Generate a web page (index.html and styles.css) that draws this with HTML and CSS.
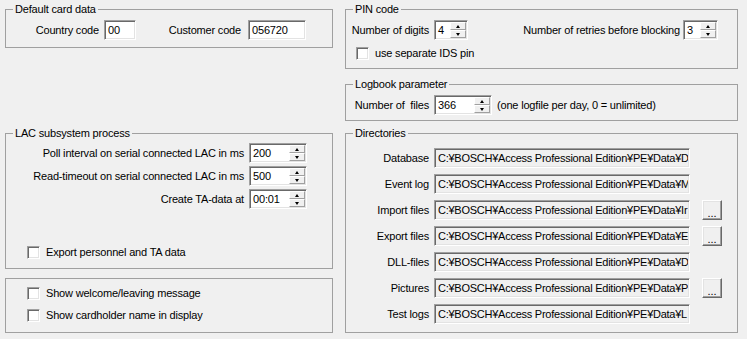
FILE: index.html
```html
<!DOCTYPE html>
<html>
<head>
<meta charset="utf-8">
<link rel="stylesheet" href="styles.css">
</head>
<body>
<div class="page">
  <div class="col col-left">
    <fieldset class="group g-card">
      <legend>Default card data</legend>
      <div class="row card-row">
        <span class="lbl lbl-country">Country code</span>
        <div class="edit w-country"><span class="val">00</span></div>
        <span class="lbl lbl-customer">Customer code</span>
        <div class="edit w-customer"><span class="val">056720</span></div>
      </div>
    </fieldset>

    <fieldset class="group g-lac">
      <legend>LAC subsystem process</legend>
      <div class="lac-rows">
        <div class="row">
          <span class="lbl lbl-lac">Poll interval on serial connected LAC in ms</span>
          <div class="edit w-lac"><span class="val">200</span><div class="spin"><div class="spin-btn"><i class="arr-up"></i></div><div class="spin-btn"><i class="arr-down"></i></div></div></div>
        </div>
        <div class="row">
          <span class="lbl lbl-lac">Read-timeout on serial connected LAC in ms</span>
          <div class="edit w-lac"><span class="val">500</span><div class="spin"><div class="spin-btn"><i class="arr-up"></i></div><div class="spin-btn"><i class="arr-down"></i></div></div></div>
        </div>
        <div class="row">
          <span class="lbl lbl-lac">Create TA-data at</span>
          <div class="edit w-lac"><span class="val">00:01</span><div class="spin"><div class="spin-btn"><i class="arr-up"></i></div><div class="spin-btn"><i class="arr-down"></i></div></div></div>
        </div>
      </div>
      <label class="check lac-check"><span class="box"></span><span>Export personnel and TA data</span></label>
    </fieldset>

    <fieldset class="group g-display">
      <label class="check"><span class="box"></span><span>Show welcome/leaving message</span></label>
      <label class="check"><span class="box"></span><span>Show cardholder name in display</span></label>
    </fieldset>
  </div>

  <div class="col col-right">
    <fieldset class="group g-pin">
      <legend>PIN code</legend>
      <div class="row">
        <span class="lbl lbl-dir">Number of digits</span>
        <div class="edit w-digits"><span class="val">4</span><div class="spin"><div class="spin-btn"><i class="arr-up"></i></div><div class="spin-btn"><i class="arr-down"></i></div></div></div>
        <span class="lbl lbl-retries">Number of retries before blocking</span>
        <div class="edit w-retries"><span class="val">3</span><div class="spin"><div class="spin-btn"><i class="arr-up"></i></div><div class="spin-btn"><i class="arr-down"></i></div></div></div>
      </div>
      <label class="check pin-check"><span class="box"></span><span>use separate IDS pin</span></label>
    </fieldset>

    <fieldset class="group g-log">
      <legend>Logbook parameter</legend>
      <div class="row">
        <span class="lbl lbl-dir">Number of&nbsp; files</span>
        <div class="edit w-files"><span class="val">366</span><div class="spin"><div class="spin-btn"><i class="arr-up"></i></div><div class="spin-btn"><i class="arr-down"></i></div></div></div>
        <span class="note">(one logfile per day, 0 = unlimited)</span>
      </div>
    </fieldset>

    <fieldset class="group g-dirs">
      <legend>Directories</legend>
      <div class="dir-rows">
        <div class="row"><span class="lbl lbl-dir">Database</span><div class="edit ro w-path"><span class="val path">C:¥BOSCH¥Access Professional Edition¥PE¥Data¥D</span></div></div>
        <div class="row"><span class="lbl lbl-dir">Event log</span><div class="edit ro w-path"><span class="val path">C:¥BOSCH¥Access Professional Edition¥PE¥Data¥M</span></div></div>
        <div class="row"><span class="lbl lbl-dir">Import files</span><div class="edit ro w-path"><span class="val path">C:¥BOSCH¥Access Professional Edition¥PE¥Data¥Ir</span></div><button class="btn">...</button></div>
        <div class="row"><span class="lbl lbl-dir">Export files</span><div class="edit ro w-path"><span class="val path">C:¥BOSCH¥Access Professional Edition¥PE¥Data¥E</span></div><button class="btn">...</button></div>
        <div class="row"><span class="lbl lbl-dir">DLL-files</span><div class="edit ro w-path"><span class="val path">C:¥BOSCH¥Access Professional Edition¥PE¥Data¥D</span></div></div>
        <div class="row"><span class="lbl lbl-dir">Pictures</span><div class="edit ro w-path"><span class="val path">C:¥BOSCH¥Access Professional Edition¥PE¥Data¥P</span></div><button class="btn">...</button></div>
        <div class="row"><span class="lbl lbl-dir">Test logs</span><div class="edit ro w-path"><span class="val path">C:¥BOSCH¥Access Professional Edition¥PE¥Data¥L</span></div></div>
      </div>
    </fieldset>
  </div>
</div>
</body>
</html>
```
FILE: styles.css
```css
* { box-sizing: border-box; }
html, body { margin: 0; padding: 0; }
body {
  background: #f0f0f0;
  color: #000;
  font-family: "Liberation Sans", Arial, sans-serif;
  font-size: 11px;
  line-height: 13px;
  letter-spacing: -0.18px;
  width: 747px;
  height: 339px;
  overflow: hidden;
}
.page {
  display: grid;
  grid-template-columns: 328px 393px;
  column-gap: 12px;
  padding: 2px 0 0 5px;
}
.col { display: flex; flex-direction: column; }

.group {
  margin: 0;
  padding: 0;
  min-inline-size: 0;
  border: 1px solid #a0a0a0;
  border-radius: 0;
}
.group legend {
  padding: 0 2px;
  margin-left: 7px;
  line-height: 14px;
  font-size: 11px;
}

.row { display: flex; align-items: center; height: 20px; }
.lbl { white-space: nowrap; text-align: right; }

/* edits */
.edit {
  height: 20px;
  display: flex;
  align-items: stretch;
  background: #fff;
  border: 1px solid;
  border-color: #a0a0a0 #fff #fff #a0a0a0;
  box-shadow: inset 1px 1px #696969, inset -1px -1px #e3e3e3;
  padding: 1px;
  overflow: hidden;
}
.edit.ro { background: #f0f0f0; }
.val {
  flex: 1;
  padding-left: 2px;
  line-height: 16px;
  white-space: nowrap;
  overflow: hidden;
}
.path { letter-spacing: -0.25px; }

.spin { width: 16px; display: flex; flex-direction: column; }
.spin-btn {
  flex: 1;
  background: #f0f0f0;
  border: 1px solid;
  border-color: #fff #a0a0a0 #a0a0a0 #fff;
  display: flex;
  align-items: center;
  justify-content: center;
}
.arr-up, .arr-down { display: block; width: 0; height: 0; border-left: 2.5px solid transparent; border-right: 2.5px solid transparent; }
.arr-up { border-bottom: 3px solid #000; }
.arr-down { border-top: 3px solid #000; }

.btn {
  width: 20px;
  height: 20px;
  margin-left: 12px;
  padding: 5px 0 0 0;
  font-family: "Liberation Sans", Arial, sans-serif;
  font-size: 11px;
  line-height: 12px;
  letter-spacing: 0;
  color: #000;
  background: #f0f0f0;
  border: 1px solid;
  border-color: #fff #696969 #696969 #fff;
  box-shadow: inset -1px -1px #a0a0a0, inset 1px 1px #e3e3e3;
  border-radius: 0;
}

/* checkboxes */
.check { display: flex; align-items: center; height: 13px; gap: 6px; white-space: nowrap; }
.box {
  width: 13px; height: 13px; flex: none;
  background: #fff;
  border: 1px solid;
  border-color: #a0a0a0 #fff #fff #a0a0a0;
  box-shadow: inset 1px 1px #696969, inset -1px -1px #e3e3e3;
}

/* default card */
.g-card { height: 46px; }
.card-row { margin-top: 4px; }
.lbl-country { width: 93px; margin-right: 5px; }
.w-country { width: 32px; }
.lbl-customer { width: 105px; margin-right: 7px; }
.w-customer { width: 58px; }

/* LAC */
.g-lac { height: 143px; margin-top: 78px; }
.lac-rows { display: flex; flex-direction: column; gap: 3px; margin-top: 3px; }
.lbl-lac { width: 238px; margin-right: 5px; }
.w-lac { width: 58px; }
.lac-check { margin: 37px 0 0 21px; }

/* display */
.g-display { height: 55px; margin-top: 9px; padding: 8px 0 0 21px; display: flex; flex-direction: column; gap: 9px; }

/* PIN */
.g-pin { height: 67px; }
.g-pin .row { margin-top: 4px; }
.lbl-dir { width: 83px; margin-right: 5px; }
.w-digits { width: 34px; }
.lbl-retries { width: 212px; margin-right: 3px; }
.w-retries { width: 35px; }
.pin-check { margin: 7px 0 0 10px; }

/* logbook */
.g-log { height: 44px; margin-top: 8px; }
.g-log .row { margin-top: 4px; }
.w-files { width: 58px; }
.note { margin-left: 5px; white-space: nowrap; }

/* directories */
.g-dirs { height: 207px; margin-top: 5px; }
.dir-rows { display: flex; flex-direction: column; gap: 6px; margin-top: 8px; }
.w-path { width: 256px; }
```
